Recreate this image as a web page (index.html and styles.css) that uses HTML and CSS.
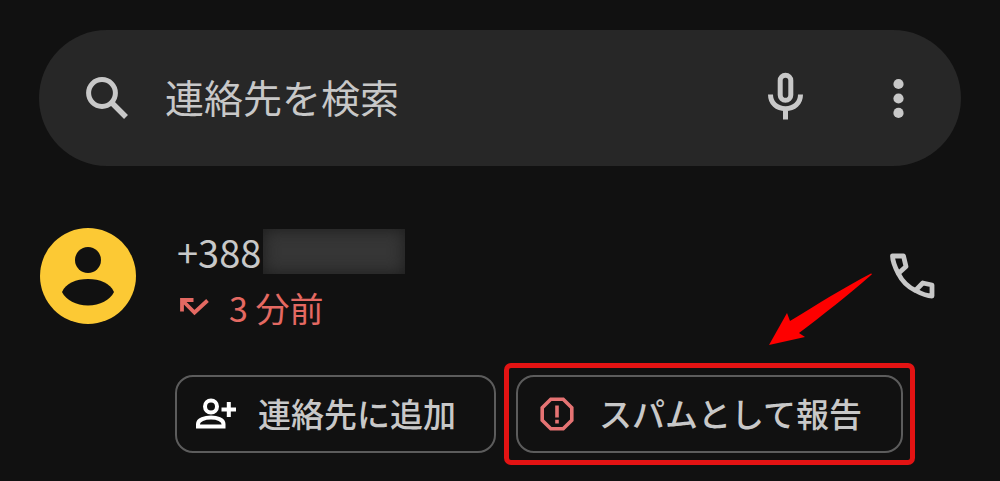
FILE: index.html
```html
<!DOCTYPE html>
<html lang="ja">
<head>
<meta charset="utf-8">
<meta name="viewport" content="width=device-width, initial-scale=1">
<title>通話履歴</title>
<link rel="stylesheet" href="styles.css">
</head>
<body>
<main class="page">
  <form class="search" role="search">
    <label class="search-label" for="contact-search" aria-label="検索">
      <svg width="42" height="42" viewBox="0 0 42 42" aria-hidden="true">
        <circle cx="16" cy="16" r="13.4" fill="none" stroke="currentColor" stroke-width="5"/>
        <path d="M25 25 L40 40" fill="none" stroke="currentColor" stroke-width="5.5"/>
      </svg>
    </label>
    <input class="search-input" id="contact-search" type="search" placeholder="連絡先を検索">
    <button class="icon-button" type="button" aria-label="音声検索">
      <svg width="36" height="52" viewBox="0 0 36 52" fill="none" stroke="currentColor" stroke-width="5" aria-hidden="true">
        <rect x="12.2" y="3.2" width="10.6" height="25" rx="5.3"/>
        <path d="M2.500 22.500 C2.500 31.500 9 36.700 17.500 36.700 S32.500 31.500 32.500 22.500 M17.500 36.700 V47.500"/>
      </svg>
    </button>
    <button class="icon-button menu-button" type="button" aria-label="その他のオプション">
      <svg width="12" height="40" viewBox="0 0 12 40" fill="currentColor" aria-hidden="true">
        <circle cx="5.500" cy="6" r="5.1"/><circle cx="5.500" cy="20.500" r="5.1"/><circle cx="5.500" cy="34.900" r="5.1"/>
      </svg>
    </button>
  </form>

  <article class="call">
    <svg class="avatar" width="96" height="96" viewBox="0 0 96 96" aria-hidden="true">
      <circle cx="48" cy="48" r="48" fill="#fcc934"/>
      <circle cx="48" cy="32" r="13" fill="#111"/>
      <path d="M22 64 C26 55 36 51 48 51 S70 55 74 64 C70 72 60 77.500 48 77.500 S26 72 22 64 Z" fill="#111"/>
    </svg>
    <div class="info">
      <div class="number">+388<span class="masked"></span></div>
      <div class="when">
        <svg width="32" height="20" viewBox="0 0 32 20" fill="none" stroke="currentColor" stroke-width="3.8" aria-hidden="true">
          <path d="M5 14.500 V3 H16.500 M5.500 3.500 L17.500 15.500 L30.500 3.500"/>
        </svg>
        <span>3 分前</span>
      </div>
    </div>
    <button class="icon-button" type="button" aria-label="電話をかける">
      <svg width="46" height="46" viewBox="0 0 46 46" fill="none" stroke="currentColor" stroke-width="4.800" stroke-linejoin="round" aria-hidden="true">
        <path d="M3.500 3 H14.500 L17 13.500 L9.300 20.500 C7 16 3.700 10 3.500 3 Z"/>
        <path d="M9.300 20.500 C13 28 19 34 26.500 37.500"/>
        <path d="M26.500 37.500 L33.800 30 L43 32 V43 C37 43 31 40 26.500 37.500 Z"/>
      </svg>
    </button>
  </article>

  <div class="actions">
    <button class="action" type="button">
      <svg width="42" height="32" viewBox="0 0 42 32" fill="none" stroke="#fff" stroke-width="4" aria-hidden="true">
        <circle cx="16" cy="8.500" r="6"/>
        <path d="M3 28.500 V26 C3 21.500 10 19.500 16 19.500 S28.500 21.500 28.500 26 V28.500 Z"/>
        <path d="M26.500 11.500 H41 M33.800 4 V19"/>
      </svg>
      <span class="action-text">連絡先に追加</span>
    </button>
    <div class="highlight">
      <button class="action spam" type="button">
        <svg width="34" height="34" viewBox="0 0 34 34" fill="none" stroke="#e57373" stroke-width="3.600" aria-hidden="true">
          <path d="M10.800 2.200 H23.200 L31.800 10.800 V23.200 L23.200 31.800 H10.800 L2.200 23.200 V10.800 Z"/>
          <path d="M17 8.500 V20.500 M17 22.800 V26.500"/>
        </svg>
        <span class="action-text">スパムとして報告</span>
      </button>
      <svg class="arrow" width="104" height="74" viewBox="0 0 104 74" aria-hidden="true">
        <path d="M1 73 L19 41 L22 49 C50 32 75 16 103 1.500 C105 2 103 3 102 4 C80 23 55 43 31 61 L37 65 Z" fill="#fe0000"/>
      </svg>
    </div>
  </div>
</main>
</body>
</html>
```
FILE: styles.css
```css
* {
  box-sizing: border-box;
}

body {
  margin: 0;
  background: #111;
  color: #c8c8c8;
  font-family: "Noto Sans CJK JP", "Noto Sans", sans-serif;
}

button {
  font: inherit;
  color: inherit;
  cursor: pointer;
}

svg {
  display: block;
  flex: none;
}

.page {
  padding: 30px 39px 12px;
}

.search {
  display: flex;
  align-items: center;
  height: 136px;
  padding: 0 56px 0 47px;
  border-radius: 68px;
  background: #272727;
}

.search-input {
  flex: 1;
  min-width: 0;
  margin-left: 37px;
  padding: 0 0 4px;
  border: 0;
  outline: 0;
  background: none;
  color: inherit;
  font: inherit;
  font-size: 39px;
}

.search-input::placeholder {
  color: #c8c8c8;
  opacity: 1;
}

.icon-button {
  padding: 0;
  border: 0;
  background: none;
}

.menu-button {
  margin-left: 89px;
}

.call {
  display: flex;
  align-items: center;
  margin-top: 51px;
  padding: 0 26px 0 1px;
}

.info {
  flex: 1;
  margin-left: 41px;
  padding-top: 6px;
}

.number {
  display: flex;
  align-items: center;
  height: 56px;
  font-size: 38px;
}

.masked {
  width: 142px;
  height: 45px;
  margin-left: 2px;
  background: #363636;
  box-shadow: inset 0 0 16px #1c1c1c;
}

.when {
  display: flex;
  align-items: center;
  gap: 20px;
  height: 56px;
  color: #e46962;
  font-size: 34px;
}

.actions {
  display: flex;
  gap: 20px;
  margin-top: 40px;
  padding-left: 136px;
}

.action {
  display: flex;
  align-items: center;
  gap: 21px;
  height: 78px;
  padding: 0 38px 0 18px;
  border: 2px solid #5c5c5c;
  border-radius: 18px;
  background: none;
  font-size: 33px;
  font-weight: 500;
  white-space: nowrap;
}

.action-text {
  padding-bottom: 2px;
}

.spam {
  gap: 25px;
  padding: 0 39px 0 22px;
}

.highlight {
  position: relative;
}

.highlight::after {
  content: "";
  position: absolute;
  inset: -12px;
  border: 5px solid #e31313;
  border-radius: 7px;
  pointer-events: none;
}

.arrow {
  position: absolute;
  right: 31px;
  bottom: 107px;
  pointer-events: none;
}
```
